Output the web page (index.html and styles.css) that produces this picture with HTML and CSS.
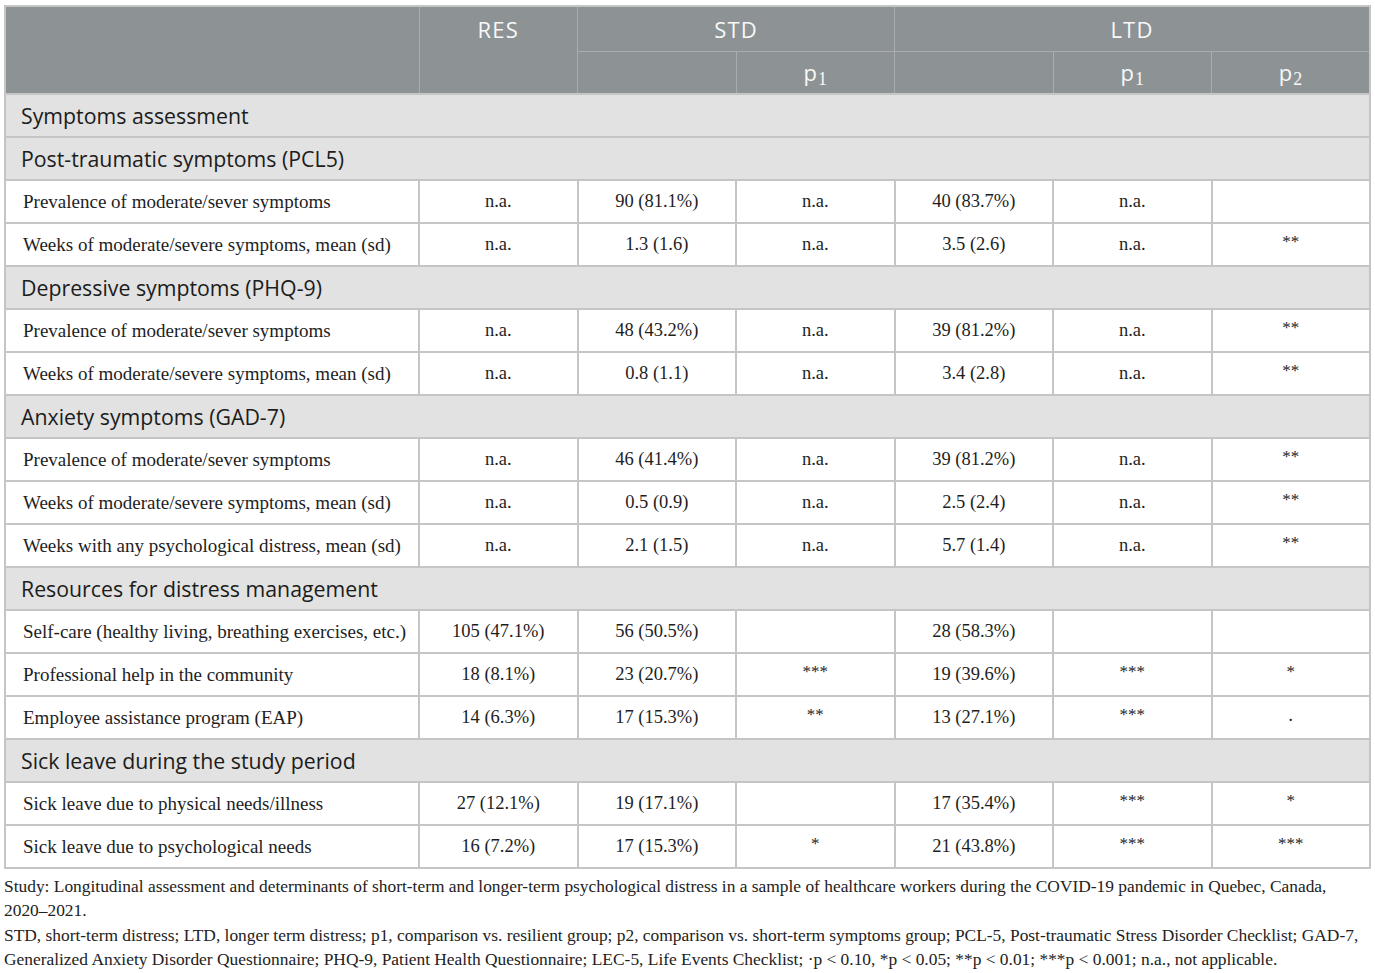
FILE: index.html
```html
<!DOCTYPE html>
<html>
<head>
<meta charset="utf-8">
<link rel="stylesheet" href="styles.css">
</head>
<body>
<table class="tbl">
  <colgroup>
    <col class="c-label">
    <col class="c-data"><col class="c-data"><col class="c-data">
    <col class="c-data"><col class="c-data"><col class="c-data">
  </colgroup>
  <thead>
    <tr class="h1">
      <th rowspan="2"></th>
      <th rowspan="2" class="top">RES</th>
      <th colspan="2">STD</th>
      <th colspan="3">LTD</th>
    </tr>
    <tr class="h2">
      <th></th>
      <th>p<sub>1</sub></th>
      <th></th>
      <th>p<sub>1</sub></th>
      <th>p<sub>2</sub></th>
    </tr>
  </thead>
  <tbody>
    <tr class="sec"><td colspan="7">Symptoms assessment</td></tr>
    <tr class="sec"><td colspan="7">Post-traumatic symptoms (PCL5)</td></tr>
    <tr><td>Prevalence of moderate/sever symptoms</td><td>n.a.</td><td>90 (81.1%)</td><td>n.a.</td><td>40 (83.7%)</td><td>n.a.</td><td></td></tr>
    <tr><td>Weeks of moderate/severe symptoms, mean (sd)</td><td>n.a.</td><td>1.3 (1.6)</td><td>n.a.</td><td>3.5 (2.6)</td><td>n.a.</td><td class="st">**</td></tr>
    <tr class="sec"><td colspan="7">Depressive symptoms (PHQ-9)</td></tr>
    <tr><td>Prevalence of moderate/sever symptoms</td><td>n.a.</td><td>48 (43.2%)</td><td>n.a.</td><td>39 (81.2%)</td><td>n.a.</td><td class="st">**</td></tr>
    <tr><td>Weeks of moderate/severe symptoms, mean (sd)</td><td>n.a.</td><td>0.8 (1.1)</td><td>n.a.</td><td>3.4 (2.8)</td><td>n.a.</td><td class="st">**</td></tr>
    <tr class="sec"><td colspan="7">Anxiety symptoms (GAD-7)</td></tr>
    <tr><td>Prevalence of moderate/sever symptoms</td><td>n.a.</td><td>46 (41.4%)</td><td>n.a.</td><td>39 (81.2%)</td><td>n.a.</td><td class="st">**</td></tr>
    <tr><td>Weeks of moderate/severe symptoms, mean (sd)</td><td>n.a.</td><td>0.5 (0.9)</td><td>n.a.</td><td>2.5 (2.4)</td><td>n.a.</td><td class="st">**</td></tr>
    <tr><td>Weeks with any psychological distress, mean (sd)</td><td>n.a.</td><td>2.1 (1.5)</td><td>n.a.</td><td>5.7 (1.4)</td><td>n.a.</td><td class="st">**</td></tr>
    <tr class="sec"><td colspan="7">Resources for distress management</td></tr>
    <tr><td>Self-care (healthy living, breathing exercises, etc.)</td><td>105 (47.1%)</td><td>56 (50.5%)</td><td></td><td>28 (58.3%)</td><td></td><td></td></tr>
    <tr><td>Professional help in the community</td><td>18 (8.1%)</td><td>23 (20.7%)</td><td class="st">***</td><td>19 (39.6%)</td><td class="st">***</td><td class="st">*</td></tr>
    <tr><td>Employee assistance program (EAP)</td><td>14 (6.3%)</td><td>17 (15.3%)</td><td class="st">**</td><td>13 (27.1%)</td><td class="st">***</td><td class="dot">·</td></tr>
    <tr class="sec"><td colspan="7">Sick leave during the study period</td></tr>
    <tr><td>Sick leave due to physical needs/illness</td><td>27 (12.1%)</td><td>19 (17.1%)</td><td></td><td>17 (35.4%)</td><td class="st">***</td><td class="st">*</td></tr>
    <tr><td>Sick leave due to psychological needs</td><td>16 (7.2%)</td><td>17 (15.3%)</td><td class="st">*</td><td>21 (43.8%)</td><td class="st">***</td><td class="st">***</td></tr>
  </tbody>
</table>
<div class="notes">
  <p>Study: Longitudinal assessment and determinants of short-term and longer-term psychological distress in a sample of healthcare workers during the COVID-19 pandemic in Quebec, Canada, 2020–2021.</p>
  <p>STD, short-term distress; LTD, longer term distress; p1, comparison vs. resilient group; p2, comparison vs. short-term symptoms group; PCL-5, Post-traumatic Stress Disorder Checklist; GAD-7, Generalized Anxiety Disorder Questionnaire; PHQ-9, Patient Health Questionnaire; LEC-5, Life Events Checklist; ·p &lt; 0.10, *p &lt; 0.05; **p &lt; 0.01; ***p &lt; 0.001; n.a., not applicable.</p>
</div>
</body>
</html>
```

FILE: styles.css
```css
html, body {
  margin: 0;
  padding: 0;
  background: #ffffff;
}

body {
  padding: 5px 6px 0 4px;
  font-family: "Liberation Serif", "Times New Roman", serif;
  color: #1a1a1a;
}

.tbl {
  width: 1365px;
  border-collapse: collapse;
  table-layout: fixed;
  border: 2px solid #c3c6c5;
}

.c-label { width: 414px; }
.c-data { width: 158.5px; }

.tbl th {
  background: #8d9294;
  color: #f7f8f8;
  font-family: "Open Sans", "Liberation Sans", sans-serif;
  font-weight: 400;
  font-size: 22px;
  letter-spacing: 1.2px;
  border: 1px solid #a9adae;
  padding: 0;
  text-align: center;
}

.tbl tr.h1 { height: 45px; }
.tbl tr.h2 { height: 43px; }

.tbl tr.h1 th { vertical-align: middle; }
.tbl tr.h1 th.top { vertical-align: top; padding-top: 7px; }

.tbl th sub {
  font-family: "Liberation Serif", serif;
  font-size: 18px;
  letter-spacing: 0;
  vertical-align: -4px;
  line-height: 0;
}

.tbl tbody tr { height: 43px; }

.tbl td {
  border: 2px solid #c3c6c5;
  padding: 0;
  text-align: center;
  font-size: 18.5px;
  color: #1e1e1e;
  vertical-align: middle;
}

.tbl td:first-child {
  text-align: left;
  padding-left: 17px;
  font-size: 19px;
}

.tbl tr.sec td {
  background: #e1e2e1;
  font-family: "Open Sans", "Liberation Sans", sans-serif;
  font-size: 21.3px;
  color: #1c1c1c;
  padding-left: 15px;
  text-align: left;
}

.tbl td.st {
  font-size: 17px;
  padding-bottom: 5px;
}

.tbl td.dot {
  font-size: 19px;
  padding-top: 4px;
}

.notes {
  margin-top: 5px;
  font-size: 17.4px;
  line-height: 24.3px;
  color: #222222;
}

.notes p {
  margin: 0;
}
```
